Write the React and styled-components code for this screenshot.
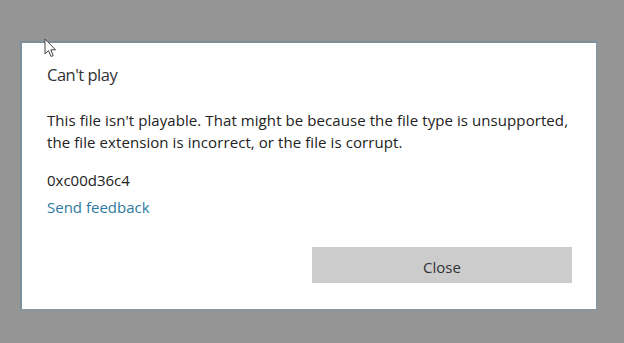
import React from 'react'
import styled, { createGlobalStyle } from 'styled-components'

const GlobalStyle = createGlobalStyle`
  html, body {
    margin: 0;
    padding: 0;
    background: #959595;
  }
`

const Backdrop = styled.div`
  position: relative;
  width: 624px;
  height: 343px;
  background: #959595;
  padding: 41px 0 0 20px;
  box-sizing: border-box;
  overflow: hidden;
  font-family: "Open Sans", "Noto Sans", sans-serif;
`

const Dialog = styled.div`
  width: 578px;
  height: 270px;
  box-sizing: border-box;
  background: #fff;
  border: 2px solid #7d8f9b;
  border-right-color: #8a969e;
  border-bottom-color: #8a969e;
  padding: 19px 24px 0 25px;
  display: flex;
  flex-direction: column;
`

const Title = styled.h1`
  margin: 0;
  font-size: 16.5px;
  font-weight: 400;
  color: #333;
  line-height: 26px;
  letter-spacing: -0.5px;
`

const Message = styled.p`
  margin: 21px 0 0;
  font-size: 15px;
  line-height: 22px;
  color: #222;
  letter-spacing: 0.08px;
`

const Code = styled.div`
  margin-top: 16px;
  font-size: 15px;
  line-height: 22px;
  color: #222;
`

const FeedbackLink = styled.a`
  margin-top: 5px;
  font-size: 15px;
  line-height: 22px;
  color: #2f7aa0;
  text-decoration: none;
  align-self: flex-start;
`

const Actions = styled.div`
  margin-top: auto;
  margin-bottom: 26px;
  display: flex;
  justify-content: flex-end;
`

const Button = styled.button`
  width: 260px;
  height: 36px;
  padding: 3px 0 0;
  border: 0;
  background: #cccccc;
  color: #333;
  font-family: inherit;
  font-size: 15px;
`

const Cursor = styled.svg`
  position: absolute;
  left: 44px;
  top: 38px;
`

export default function App() {
  return (
    <>
      <GlobalStyle />
      <Backdrop>
        <Dialog>
          <Title>Can't play</Title>
          <Message>
            This file isn't playable. That might be because the file type is unsupported,
            <br />
            the file extension is incorrect, or the file is corrupt.
          </Message>
          <Code>0xc00d36c4</Code>
          <FeedbackLink href="#">Send feedback</FeedbackLink>
          <Actions>
            <Button>Close</Button>
          </Actions>
        </Dialog>
        <Cursor width="14" height="21" viewBox="0 0 14 21">
          <path
            d="M1 1 L1 16 L4.5 12.5 L7 18.5 L9.2 17.6 L6.8 11.8 L11.5 11.8 Z"
            fill="#fff"
            stroke="#444"
            strokeWidth="1"
            strokeLinejoin="round"
          />
        </Cursor>
      </Backdrop>
    </>
  )
}
